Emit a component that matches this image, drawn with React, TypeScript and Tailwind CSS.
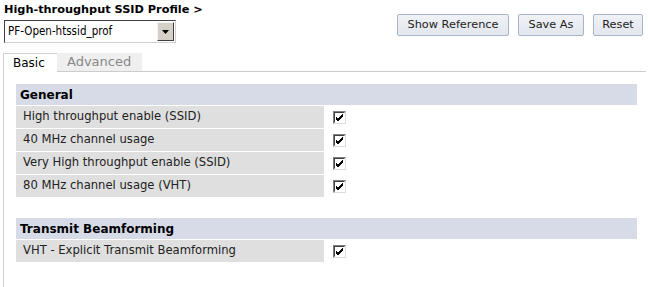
import React from 'react';

const general = [
  'High throughput enable (SSID)',
  '40 MHz channel usage',
  'Very High throughput enable (SSID)',
  '80 MHz channel usage (VHT)',
];

const beamforming = ['VHT - Explicit Transmit Beamforming'];

// old-style checked box
const CheckBox = () => (
  <div className="w-[13px] h-[13px] border border-t-[#808080] border-l-[#808080] border-r-[#dcdcdc] border-b-[#dcdcdc] bg-white flex items-center justify-center">
    <div className="w-[11px] h-[11px] border border-t-[#404040] border-l-[#404040] border-r-transparent border-b-transparent flex items-center justify-center">
      <svg width="9" height="9" viewBox="0 0 9 9">
        <path d="M1 4 L3 6 L8 1 M1 5 L3 7 L8 2 M1 6 L3 8 L8 3" stroke="#000" strokeWidth="1" fill="none" shapeRendering="crispEdges" />
      </svg>
    </div>
  </div>
);

const Section = ({ title, rows }: { title: string; rows: string[] }) => (
  <div className="flex flex-col">
    <div className="h-[21px] bg-[#d6dbe7] flex items-center pl-[4px] font-bold text-[12px] text-black">{title}</div>
    <div className="flex flex-col gap-[1px] mt-[1px]">
      {rows.map((r) => (
        <div key={r} className="flex items-center h-[22px]">
          <div className="w-[308px] h-full bg-[#dfdfdf] flex items-center pl-[7px] text-[11.6px] text-[#222]">{r}</div>
          <div className="pl-[9px]">
            <CheckBox />
          </div>
        </div>
      ))}
    </div>
  </div>
);

const Btn = ({ label, width }: { label: string; width: string }) => (
  <button className={`${width} h-[22px] text-[11.3px] text-[#222] bg-gradient-to-b from-[#f0f2f6] to-[#e2e6ee] border border-[#a8b4c8] rounded-[2px]`}>
    {label}
  </button>
);

export default function App() {
  return (
    <div className="w-[648px] h-[287px] bg-white overflow-hidden text-[11px] text-[#222]" style={{ fontFamily: '"DejaVu Sans", Verdana, sans-serif' }}>
      <div className="flex justify-between">
        <div className="pl-[4px] pt-[3px]">
          <div className="font-bold text-[11.3px] text-black leading-[14px]">High-throughput SSID Profile &gt;</div>
          <div className="mt-[3px] w-[172px] h-[23px] border border-t-[#404040] border-l-[#404040] border-r-[#d0d0d0] border-b-[#d0d0d0] bg-white flex items-center">
            <span className="flex-1 pl-[3px] text-[11.5px] text-black" style={{ fontFamily: '"DejaVu Sans Condensed", "DejaVu Sans", sans-serif' }}>PF-Open-htssid_prof</span>
            <div className="w-[17px] h-[19px] mr-[1px] bg-[#d4d0c8] border border-t-[#f4f4f4] border-l-[#f4f4f4] border-r-[#404040] border-b-[#404040] flex items-center justify-center">
              <svg width="7" height="4" viewBox="0 0 7 4">
                <path d="M0 0 H7 L3.5 4 Z" fill="#000" />
              </svg>
            </div>
          </div>
        </div>
        <div className="flex gap-[9px] pt-[14px] pr-[5px]">
          <Btn label="Show Reference" width="w-[112px]" />
          <Btn label="Save As" width="w-[66px]" />
          <Btn label="Reset" width="w-[50px]" />
        </div>
      </div>

      <div className="mt-[10px] ml-[3px] mr-[2px] flex items-end">
        <div className="w-[54px] h-[19px] pl-[9px] flex items-center border-l border-t border-[#d0d0d0] text-[12px] text-black bg-white">Basic</div>
        <div className="w-[85px] h-[19px] pl-[10px] flex items-center bg-[#efefef] border-b border-[#cccccc] text-[13px] text-[#888]">Advanced</div>
        <div className="flex-1 border-b border-[#cccccc]" />
      </div>

      <div className="ml-[3px] border-l border-[#d0d0d0] h-[220px] pl-[12px] pr-[11px] pt-[12px] flex flex-col gap-[21px]">
        <Section title="General" rows={general} />
        <Section title="Transmit Beamforming" rows={beamforming} />
      </div>
    </div>
  );
}
